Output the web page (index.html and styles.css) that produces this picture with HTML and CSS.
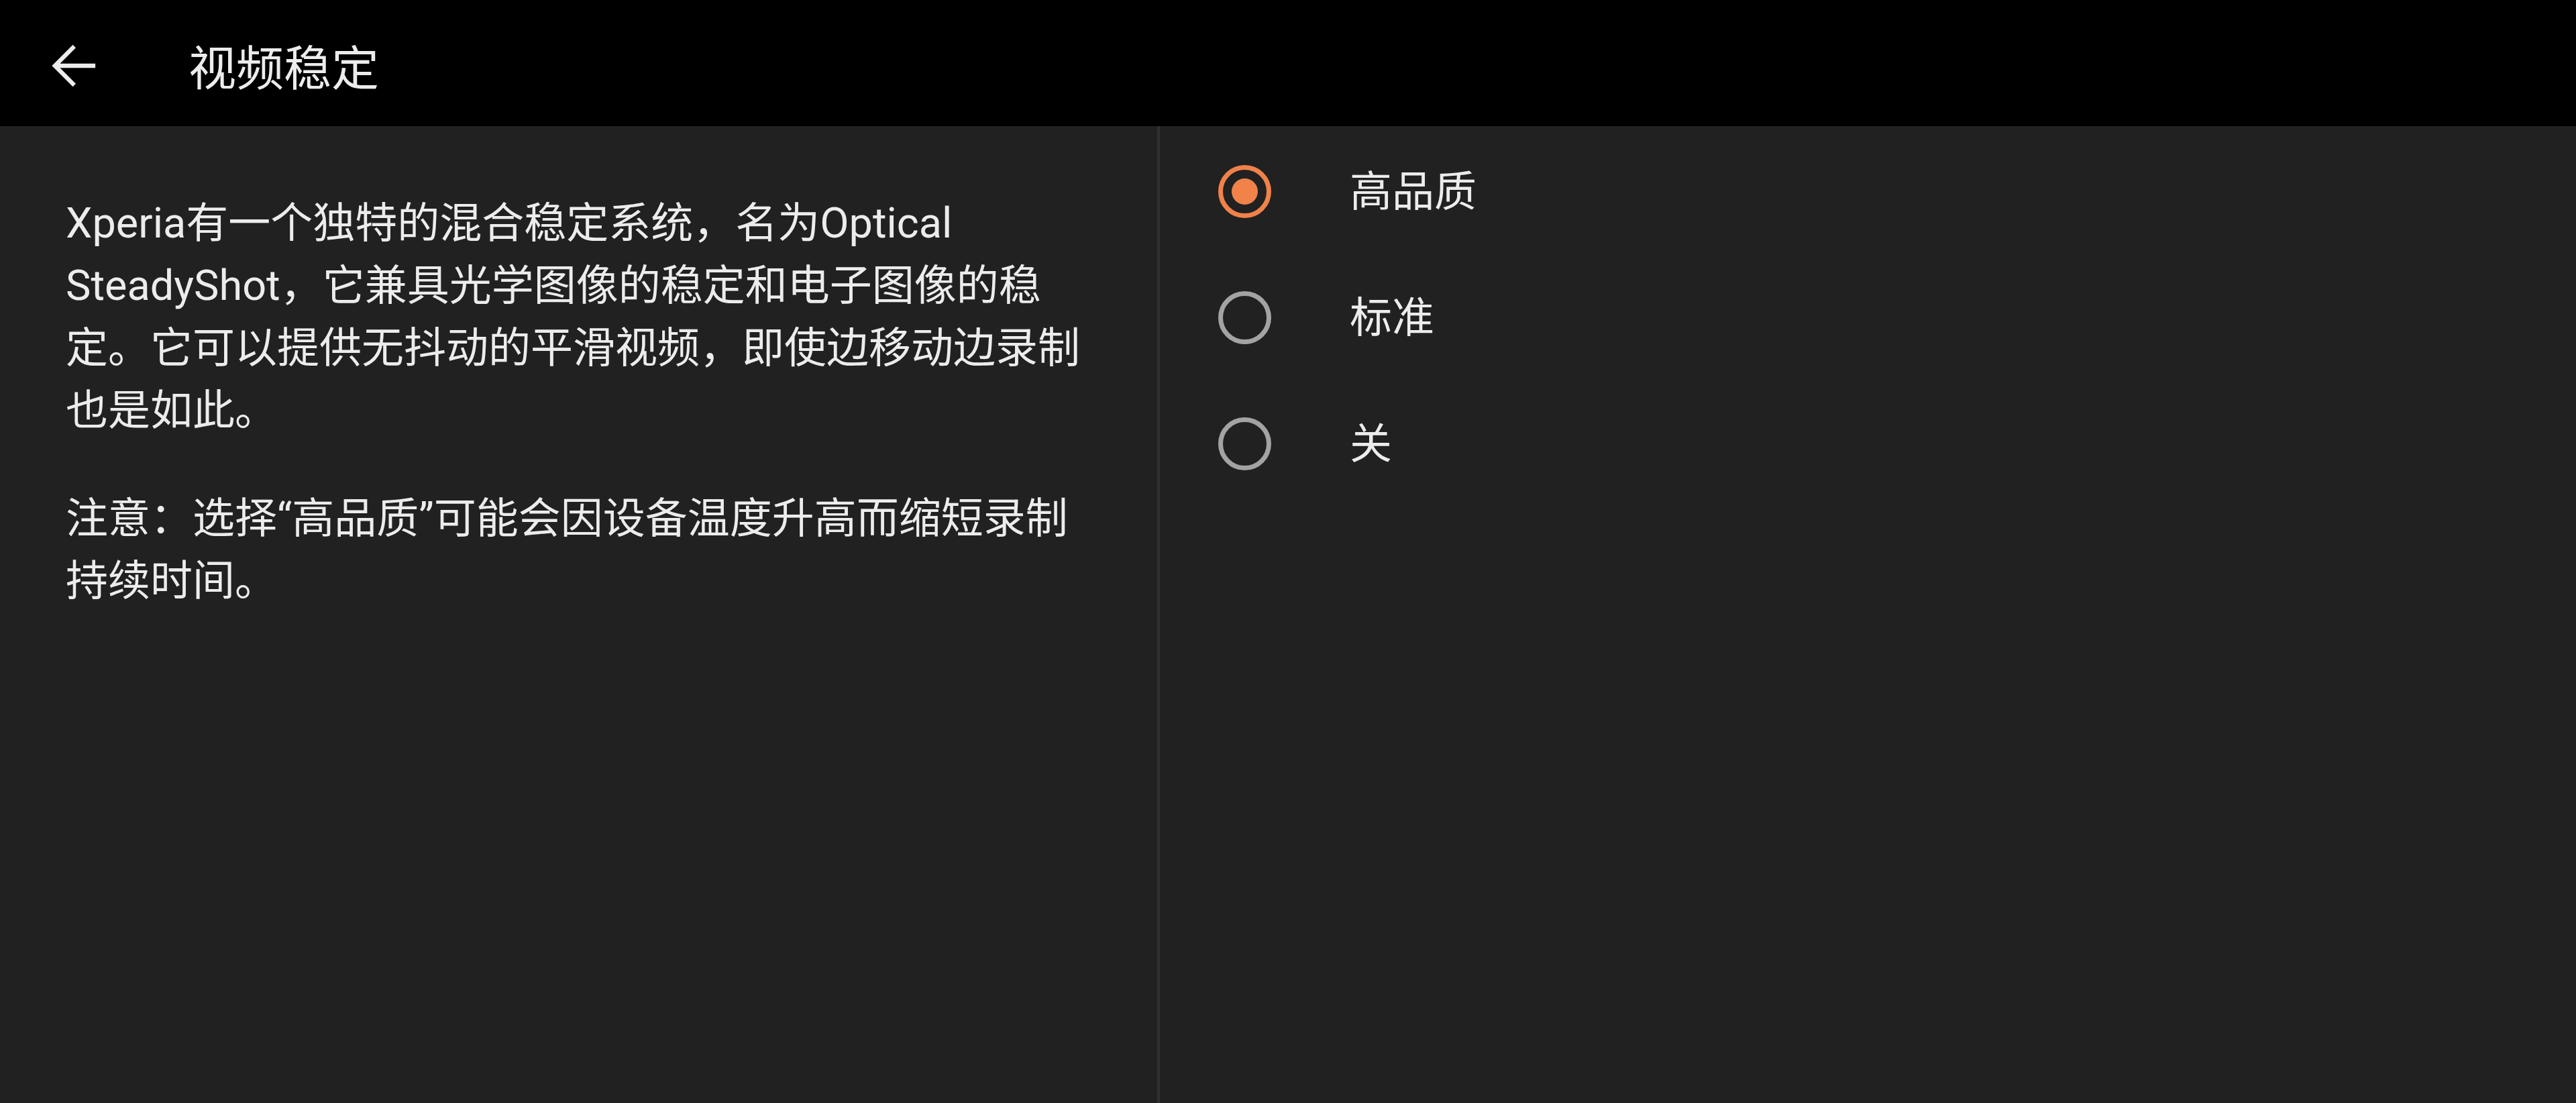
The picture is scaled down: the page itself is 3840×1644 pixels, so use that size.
FILE: index.html
```html
<!DOCTYPE html>
<html lang="zh-CN">
<head>
<meta charset="utf-8">
<title>视频稳定</title>
<link rel="stylesheet" href="styles.css">
</head>
<body>
<header class="toolbar">
  <svg class="back" viewBox="0 0 24 24" aria-label="返回">
    <path d="M20.2 12H5.2 M12.2 4.6 L4.8 12 L12.2 19.4" fill="none" stroke="#ececec" stroke-width="1.6" stroke-linecap="butt" stroke-linejoin="miter"/>
  </svg>
  <h1 class="title">视频稳定</h1>
</header>
<main class="content">
  <section class="desc">
    <p class="para">Xperia有一个独特的混合稳定系统，名为Optical SteadyShot，它兼具光学图像的稳定和电子图像的稳定。它可以提供无抖动的平滑视频，即使边移动边录制也是如此。</p>
    <p class="para">注意：选择“高品质”可能会因设备温度升高而缩短录制持续时间。</p>
  </section>
  <section class="options">
    <div class="option">
      <span class="radio radio-on"><span class="dot"></span></span>
      <span class="label">高品质</span>
    </div>
    <div class="option">
      <span class="radio"></span>
      <span class="label">标准</span>
    </div>
    <div class="option">
      <span class="radio"></span>
      <span class="label">关</span>
    </div>
  </section>
</main>
</body>
</html>
```

FILE: styles.css
```css
html, body {
  margin: 0;
  padding: 0;
  height: 100%;
}

body {
  background: #212121;
  color: #ececec;
  font-family: Roboto, "Noto Sans CJK SC", "Noto Sans", sans-serif;
  display: flex;
  flex-direction: column;
  overflow: hidden;
}

.toolbar {
  box-sizing: border-box;
  height: 188px;
  flex: 0 0 188px;
  padding-top: 8px;
  background: #000;
  display: flex;
  align-items: center;
}

.back {
  width: 94px;
  height: 94px;
  margin-left: 63px;
  flex: 0 0 auto;
}

.title {
  margin: 8px 0 0 124px;
  font-size: 71px;
  font-weight: 400;
  line-height: 1;
  color: #ececec;
}

.content {
  flex: 1 1 auto;
  display: flex;
}

.desc {
  width: 1544px;
  padding: 98px 83px 0 98px;
  border-right: 4px solid #303030;
  flex: 0 0 auto;
}

.para {
  margin: 0 0 68px 0;
  font-size: 63px;
  line-height: 93px;
  letter-spacing: 0;
}

.options {
  flex: 1 1 auto;
  padding: 3px 0 0 87px;
  display: flex;
  flex-direction: column;
}

.option {
  height: 188px;
  display: flex;
  align-items: center;
}

.radio {
  box-sizing: border-box;
  width: 79px;
  height: 79px;
  border-radius: 50%;
  border: 7px solid #a3a3a3;
  display: flex;
  align-items: center;
  justify-content: center;
  flex: 0 0 auto;
}

.radio-on {
  border-color: #f0824a;
}

.dot {
  width: 39px;
  height: 39px;
  border-radius: 50%;
  background: #f0824a;
}

.label {
  margin-left: 117px;
  font-size: 63px;
  line-height: 1;
  color: #ececec;
}
```
